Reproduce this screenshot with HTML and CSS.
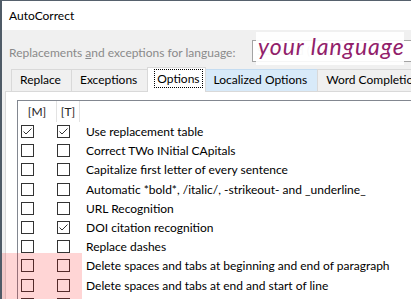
FILE: index.html
```html
<!DOCTYPE html>
<html lang="en">
<head>
    <meta charset="UTF-8">
    <title>AutoCorrect</title>
    <link rel="stylesheet" href="styles.css">
</head>
<body>
    <div class="window">
        <div class="titlebar">AutoCorrect</div>

        <div class="dialog">
            <div class="lang-row">
                <span class="lang-label">Replacements <u>a</u>nd exceptions for language:</span>
                <div class="combo">Standard (Mac)</div>
            </div>

            <div class="tabs">
                <div class="tab">Replace</div>
                <div class="tab">Exceptions</div>
                <div class="tab active"><span class="focus">Options</span></div>
                <div class="tab hover">Localized Options</div>
                <div class="tab">Word Completion</div>
            </div>

            <div class="panel">
                <div class="list">
                    <div class="list-head">
                        <div class="col-m">[M]</div>
                        <div class="col-t">[T]</div>
                    </div>

                    <div class="row">
                        <span class="cb"><svg viewBox="0 0 11 11"><polyline points="1.5,5.5 4,8 9.5,2.5"/></svg></span>
                        <span class="cb"><svg viewBox="0 0 11 11"><polyline points="1.5,5.5 4,8 9.5,2.5"/></svg></span>
                        <span class="label">Use replacement table</span>
                    </div>
                    <div class="row">
                        <span class="cb"></span>
                        <span class="cb"></span>
                        <span class="label">Correct TWo INitial CApitals</span>
                    </div>
                    <div class="row">
                        <span class="cb"></span>
                        <span class="cb"></span>
                        <span class="label">Capitalize first letter of every sentence</span>
                    </div>
                    <div class="row">
                        <span class="cb"></span>
                        <span class="cb"></span>
                        <span class="label">Automatic *bold*, /italic/, -strikeout- and _underline_</span>
                    </div>
                    <div class="row">
                        <span class="cb"></span>
                        <span class="cb"></span>
                        <span class="label">URL Recognition</span>
                    </div>
                    <div class="row">
                        <span class="cb"></span>
                        <span class="cb"><svg viewBox="0 0 11 11"><polyline points="1.5,5.5 4,8 9.5,2.5"/></svg></span>
                        <span class="label">DOI citation recognition</span>
                    </div>
                    <div class="row">
                        <span class="cb"></span>
                        <span class="cb"></span>
                        <span class="label">Replace dashes</span>
                    </div>
                    <div class="row">
                        <span class="cb"></span>
                        <span class="cb"></span>
                        <span class="label">Delete spaces and tabs at beginning and end of paragraph</span>
                    </div>
                    <div class="row">
                        <span class="cb"></span>
                        <span class="cb"></span>
                        <span class="label">Delete spaces and tabs at end and start of line</span>
                    </div>
                    <div class="row">
                        <span class="cb"></span>
                        <span class="cb"></span>
                        <span class="label">Correct accidental use of cAPS LOCK key</span>
                    </div>
                </div>
            </div>
        </div>

        <div class="lang-note">your language</div>
        <div class="mark"></div>
    </div>
</body>
</html>
```

FILE: styles.css
```css
* {
    margin: 0;
    padding: 0;
    box-sizing: border-box;
}

body {
    font-family: 'Lato', 'Noto Sans', sans-serif;
    font-size: 12px;
    color: #000;
    background-color: #f0f0f0;
    overflow: hidden;
}

.window {
    position: relative;
    width: 411px;
    height: 299px;
    overflow: hidden;
    border-top: 1px solid #56616d;
    border-left: 2px solid #4f5b67;
    background-color: #f0f0f0;
}

.titlebar {
    height: 29px;
    line-height: 29px;
    padding-left: 7px;
    background-color: #fff;
}

.lang-row {
    display: grid;
    grid-template-columns: 243px 200px;
    align-items: center;
    height: 22px;
    margin-top: 10px;
    padding-left: 7px;
    color: #8a8a8a;
}

.lang-label {
    padding-top: 3px;
    white-space: nowrap;
}

.combo {
    height: 22px;
    line-height: 20px;
    padding-left: 4px;
    border: 1px solid #a3a3a3;
    background-color: #fff;
    color: #b5b5b5;
}

.tabs {
    display: flex;
    align-items: flex-end;
    height: 24px;
    margin-top: 5px;
    padding-left: 9px;
    white-space: nowrap;
}

.tab {
    flex: none;
    height: 22px;
    line-height: 20px;
    padding: 0 10px 0 8px;
    border: 1px solid #d9d9d9;
    border-bottom: none;
    margin-right: -1px;
    background-color: #f0f0f0;
}

.tab.active {
    position: relative;
    z-index: 1;
    height: 25px;
    margin-bottom: -1px;
    padding: 0 3px 0 7px;
    background-color: #fff;
    line-height: 22px;
}

.tab.hover {
    background-color: #d8eaf9;
    border-color: #c4dcf1;
}

.focus {
    padding: 1px 2px;
    outline: 1px dotted #000;
    outline-offset: 0;
}

.panel {
    height: 220px;
    margin-left: 3px;
    padding: 8px 0 0 11px;
    background-color: #fff;
    border-top: 1px solid #d9d9d9;
    border-left: 1px solid #d9d9d9;
}

.list {
    border: 1px solid #828790;
    border-right: none;
    background-color: #fff;
}

.list-head {
    display: flex;
    height: 21px;
    line-height: 21px;
    color: #222;
}

.list-head div {
    text-align: center;
    border-right: 1px solid #e3e3e3;
}

.col-m {
    width: 39px;
}

.col-t {
    width: 23px;
}

.row {
    display: flex;
    align-items: center;
    height: 19.2px;
    padding-left: 3px;
    white-space: nowrap;
}

.cb {
    flex: none;
    width: 13px;
    height: 13px;
    margin-right: 23px;
    border: 1px solid #333;
    background-color: #fff;
}

.cb + .cb {
    margin-right: 16px;
}

.cb svg {
    display: block;
    width: 11px;
    height: 11px;
    fill: none;
    stroke: #333;
    stroke-width: 1;
}

.lang-note {
    position: absolute;
    left: 254px;
    top: 31px;
    width: 148px;
    height: 33px;
    padding-left: 2px;
    background-color: rgba(255, 255, 255, 0.9);
    font-family: 'Lato', sans-serif;
    font-style: italic;
    font-size: 23px;
    letter-spacing: 1px;
    line-height: 28px;
    color: #91206a;
    white-space: nowrap;
}

.mark {
    position: absolute;
    left: -2px;
    top: 252px;
    width: 82px;
    height: 50px;
    background-color: rgba(255, 0, 0, 0.165);
}
```
